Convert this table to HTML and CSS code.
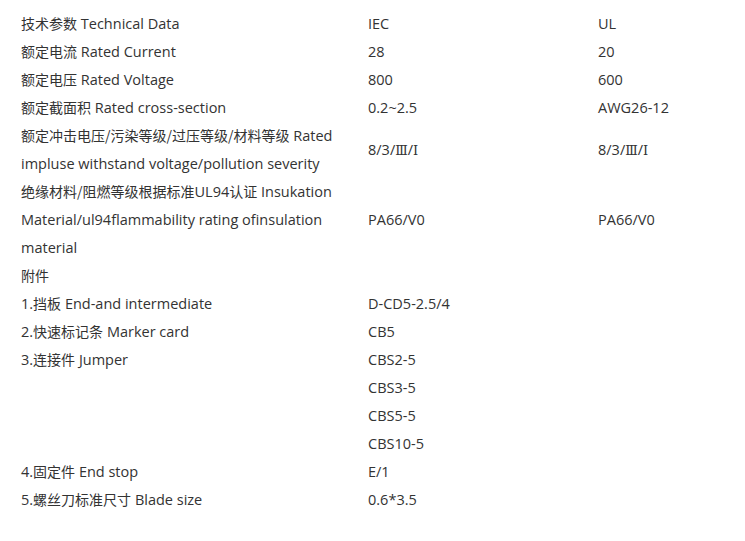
FILE: index.html
```html
<!DOCTYPE html>
<html lang="zh">
<head>
<meta charset="utf-8">
<link rel="stylesheet" href="styles.css">
</head>
<body>
<table class="spec">
<colgroup><col class="c1"><col class="c2"><col class="c3"></colgroup>
<tbody>
<tr><td><span class="zh">技术参数</span> Technical Data</td><td>IEC</td><td>UL</td></tr>
<tr><td><span class="zh">额定电流</span> Rated Current</td><td>28</td><td>20</td></tr>
<tr><td><span class="zh">额定电压</span> Rated Voltage</td><td>800</td><td>600</td></tr>
<tr><td><span class="zh">额定截面积</span> Rated cross-section</td><td>0.2~2.5</td><td>AWG26-12</td></tr>
<tr><td><span class="zh">额定冲击电压/污染等级/过压等级/材料等级</span> Rated impluse withstand voltage/pollution severity</td><td>8/3/<span class="roman">Ⅲ</span>/<span class="roman">Ⅰ</span></td><td>8/3/<span class="roman">Ⅲ</span>/<span class="roman">Ⅰ</span></td></tr>
<tr><td><span class="zh">绝缘材料/阻燃等级根据标准</span>UL94<span class="zh">认证</span> Insukation Material/ul94flammability rating ofinsulation material</td><td>PA66/V0</td><td>PA66/V0</td></tr>
<tr><td><span class="zh">附件</span></td><td></td><td></td></tr>
<tr><td>1.<span class="zh">挡板</span> End-and intermediate</td><td>D-CD5-2.5/4</td><td></td></tr>
<tr><td>2.<span class="zh">快速标记条</span> Marker card</td><td>CB5</td><td></td></tr>
<tr><td>3.<span class="zh">连接件</span> Jumper</td><td>CBS2-5</td><td></td></tr>
<tr><td></td><td>CBS3-5</td><td></td></tr>
<tr><td></td><td>CBS5-5</td><td></td></tr>
<tr><td></td><td>CBS10-5</td><td></td></tr>
<tr><td>4.<span class="zh">固定件</span> End stop</td><td>E/1</td><td></td></tr>
<tr><td>5.<span class="zh">螺丝刀标准尺寸</span> Blade size</td><td>0.6*3.5</td><td></td></tr>
</tbody>
</table>
</body>
</html>
```
FILE: styles.css
```css
html, body {
  margin: 0;
  padding: 0;
  background: #fff;
}
body {
  padding: 10px 0 0 21px;
  font-family: "Open Sans", "Noto Sans CJK SC", sans-serif;
  font-size: 14.5px;
  line-height: 28px;
  color: #333;
}
.zh {
  font-family: "Noto Sans CJK SC", sans-serif;
  font-size: 14px;
  line-height: 14px;
}
.roman {
  font-family: "DejaVu Serif", serif;
  font-size: 13px;
  line-height: 13px;
}
.spec {
  border-collapse: collapse;
  table-layout: fixed;
  width: 724px;
}
.spec td {
  padding: 0;
  vertical-align: middle;
  height: 28px;
}
.c1 { width: 347px; }
.c2 { width: 230px; }
.c3 { width: 147px; }
```
